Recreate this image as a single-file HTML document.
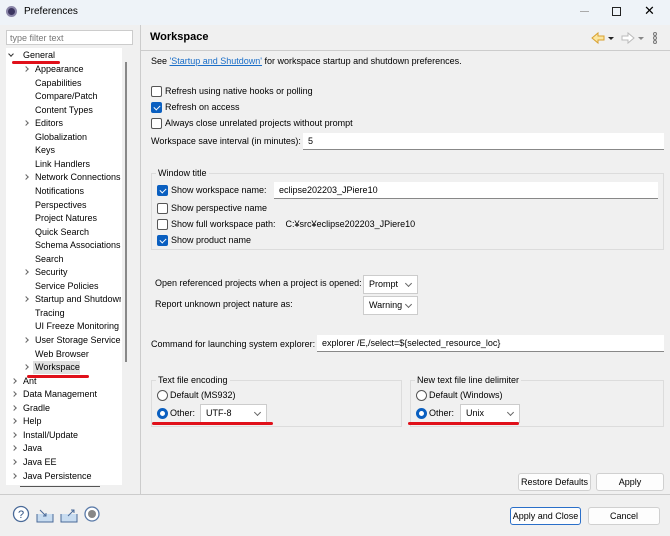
<!DOCTYPE html>
<html><head><meta charset="utf-8"><style>
*{margin:0;padding:0;box-sizing:border-box}
body{width:670px;height:536px;background:#f0f0f0;font-family:"Liberation Sans",sans-serif;font-size:9px;color:#000;position:relative;overflow:hidden}
.a{position:absolute;white-space:nowrap;line-height:12px}
.cb{position:absolute;width:11px;height:11px;border:1px solid #555;border-radius:2px;background:#fff;margin-top:1px}
.cb.on{background:#0a5fc0;border-color:#0a5fc0}
.cb.on::after{content:"";position:absolute;left:3px;top:1px;width:3px;height:5px;border:solid #fff;border-width:0 1.3px 1.3px 0;transform:rotate(45deg)}
.rb{position:absolute;width:11px;height:11px;border:1px solid #555;border-radius:50%;background:#fff;margin-top:1px}
.rb.on{border:3px solid #0a5fc0}
.tx{position:absolute;background:#fff;border-bottom:1px solid #888;height:17px;padding:3px 5px;line-height:11px}
.dd{position:absolute;background:#fff;border:1px solid #ccc;height:19px;padding:3px 5px;line-height:11px}
.dd::after{content:"";position:absolute;right:6px;top:5px;width:4px;height:4px;border:solid #666;border-width:0 1px 1px 0;transform:rotate(45deg)}
.btn{position:absolute;background:#fdfdfd;border:1px solid #d0d0d0;border-radius:3px;height:18px;text-align:center;line-height:16px}
.grp{position:absolute;border:1px solid #dcdcdc}
.red{position:absolute;height:3px;background:#e0101a;border-radius:2px}
.arr{position:absolute;width:4px;height:4px;border:solid #666;border-width:0 1px 1px 0;transform:rotate(-45deg)}
</style></head><body>
<div style="position:absolute;left:0;top:0;width:670px;height:25px;background:#eef3f8"></div>
<div class="a" style="left:6px;top:6px;width:11px;height:11px;border-radius:50%;background:#3b3560;border:2px solid #8a86a8"></div>
<div class="a" style="left:24px;top:6px;font-size:10px">Preferences</div>
<div class="a" style="left:580px;top:11px;width:9px;height:1px;background:#aaa"></div>
<div class="a" style="left:612px;top:7px;width:9px;height:9px;border:1px solid #222"></div>
<div class="a" style="left:644px;top:4px;font-size:13px;line-height:14px">✕</div>
<div class="a" style="left:6px;top:30px;width:127px;height:15px;background:#fff;border:1px solid #ccc;color:#777;padding:1px 3px;line-height:12px">type filter text</div>
<div class="a" style="left:6px;top:48px;width:116px;height:437px;background:#fff"></div>
<div class="a" style="left:125px;top:62px;width:2px;height:300px;background:#888"></div>
<div class="a" style="left:20px;top:486px;width:80px;height:1px;background:#555"></div>
<div class="a" style="left:9px;top:52px;width:4px;height:4px;border:solid #333;border-width:0 1.2px 1.2px 0;transform:rotate(45deg)"></div>
<div class="a" style="left:23px;top:49px">General</div>
<div class="red" style="left:12px;top:61px;width:48px"></div>
<div class="a" style="left:33px;top:361px;width:47px;height:13px;background:#e0e0e0"></div>
<div id="tree"></div>
<div class="red" style="left:27px;top:375px;width:62px"></div>
<div class="a" style="left:140px;top:25px;width:1px;height:469px;background:#ccc"></div>
<div class="a" style="left:140px;top:50px;width:530px;height:1px;background:#ccc"></div>
<div class="a" style="left:0;top:494px;width:670px;height:1px;background:#ccc"></div>
<div class="a" style="left:150px;top:31px;font-size:11px;font-weight:bold;line-height:13px">Workspace</div>
<svg class="a" style="left:590px;top:31px" width="72" height="14"><path d="M2 7 L8 2 V5 H14 V9 H8 V12 Z" fill="#fbe6a0" stroke="#d8a030"/><path d="M18 6 L24 6 L21 9Z" fill="#222"/><path d="M44 7 L38 2 V5 H32 V9 H38 V12 Z" fill="#fff" stroke="#bbb"/><path d="M48 6 L54 6 L51 9Z" fill="#888"/><circle cx="65" cy="3" r="1.5" fill="none" stroke="#777"/><circle cx="65" cy="7" r="1.5" fill="none" stroke="#777"/><circle cx="65" cy="11" r="1.5" fill="none" stroke="#777"/></svg>
<div class="a" style="left:151px;top:55px">See <span style="color:#1a6ec8;text-decoration:underline">'Startup and Shutdown'</span> for workspace startup and shutdown preferences.</div>
<div class="cb" style="left:151px;top:85px"></div><div class="a" style="left:165px;top:85px">Refresh using native hooks or polling</div>
<div class="cb on" style="left:151px;top:101px"></div><div class="a" style="left:165px;top:101px">Refresh on access</div>
<div class="cb" style="left:151px;top:117px"></div><div class="a" style="left:165px;top:117px">Always close unrelated projects without prompt</div>
<div class="a" style="left:151px;top:135px">Workspace save interval (in minutes):</div>
<div class="tx" style="left:303px;top:133px;width:361px">5</div>
<div class="grp" style="left:151px;top:173px;width:513px;height:77px"></div>
<div class="a" style="left:156px;top:167px;background:#f0f0f0;padding:0 2px">Window title</div>
<div class="cb on" style="left:157px;top:184px"></div><div class="a" style="left:171px;top:184px">Show workspace name:</div>
<div class="tx" style="left:274px;top:182px;width:384px">eclipse202203_JPiere10</div>
<div class="cb" style="left:157px;top:202px"></div><div class="a" style="left:171px;top:202px">Show perspective name</div>
<div class="cb" style="left:157px;top:218px"></div><div class="a" style="left:171px;top:218px">Show full workspace path:&nbsp;&nbsp;&nbsp; C:¥src¥eclipse202203_JPiere10</div>
<div class="cb on" style="left:157px;top:234px"></div><div class="a" style="left:171px;top:234px">Show product name</div>
<div class="a" style="left:155px;top:277px">Open referenced projects when a project is opened:</div>
<div class="dd" style="left:363px;top:275px;width:55px">Prompt</div>
<div class="a" style="left:155px;top:298px">Report unknown project nature as:</div>
<div class="dd" style="left:363px;top:296px;width:55px">Warning</div>
<div class="a" style="left:151px;top:338px">Command for launching system explorer:</div>
<div class="tx" style="left:317px;top:335px;width:347px">explorer /E,/select=${selected_resource_loc}</div>
<div class="grp" style="left:151px;top:380px;width:251px;height:47px"></div>
<div class="a" style="left:156px;top:374px;background:#f0f0f0;padding:0 2px">Text file encoding</div>
<div class="rb" style="left:157px;top:389px"></div><div class="a" style="left:170px;top:389px">Default (MS932)</div>
<div class="rb on" style="left:157px;top:407px"></div><div class="a" style="left:170px;top:407px">Other:</div>
<div class="dd" style="left:200px;top:404px;width:67px">UTF-8</div>
<div class="red" style="left:152px;top:422px;width:121px"></div>
<div class="grp" style="left:410px;top:380px;width:254px;height:47px"></div>
<div class="a" style="left:415px;top:374px;background:#f0f0f0;padding:0 2px">New text file line delimiter</div>
<div class="rb" style="left:416px;top:389px"></div><div class="a" style="left:429px;top:389px">Default (Windows)</div>
<div class="rb on" style="left:416px;top:407px"></div><div class="a" style="left:429px;top:407px">Other:</div>
<div class="dd" style="left:460px;top:404px;width:60px">Unix</div>
<div class="red" style="left:408px;top:422px;width:111px"></div>
<div class="btn" style="left:518px;top:473px;width:73px">Restore Defaults</div>
<div class="btn" style="left:596px;top:473px;width:68px">Apply</div>
<svg class="a" style="left:12px;top:505px" width="90" height="20"><circle cx="9" cy="9" r="7.5" fill="#fff" stroke="#4a6a98" stroke-width="1.3"/><text x="9" y="13" font-size="11" text-anchor="middle" fill="#2d4f80" font-family="Liberation Sans">?</text><path d="M25 9 V17 H41 V9 M28 5 L34 11 M31 11 H34 V8" fill="#c8dcf0" stroke="#4a6a98"/><path d="M49 9 V17 H65 V9 M56 11 L62 5 M59 5 H62 V8" fill="#c8dcf0" stroke="#4a6a98"/><circle cx="80" cy="9" r="7" fill="#fff" stroke="#5a7aa8" stroke-width="1.3"/><circle cx="80" cy="9" r="4" fill="#888"/></svg>
<div class="btn" style="left:510px;top:507px;width:71px;border-color:#2a6fc9">Apply and Close</div>
<div class="btn" style="left:588px;top:507px;width:72px">Cancel</div>
<script>
var items=[["Appearance",1],["Capabilities",0],["Compare/Patch",0],["Content Types",0],["Editors",1],["Globalization",0],["Keys",0],["Link Handlers",0],["Network Connections",1],["Notifications",0],["Perspectives",0],["Project Natures",0],["Quick Search",0],["Schema Associations",0],["Search",0],["Security",1],["Service Policies",0],["Startup and Shutdown",1],["Tracing",0],["UI Freeze Monitoring",0],["User Storage Service",1],["Web Browser",0],["Workspace",1]];
var top2=[["Ant"],["Data Management"],["Gradle"],["Help"],["Install/Update"],["Java"],["Java EE"],["Java Persistence"]];
var h="",y=63;
items.forEach(function(it){h+='<div class="a" style="left:35px;top:'+y+'px;width:86px;overflow:hidden">'+it[0]+'</div>';if(it[1])h+='<div class="arr" style="left:24px;top:'+(y+4)+'px"></div>';y+=13.55;});
top2.forEach(function(it){h+='<div class="a" style="left:23px;top:'+y+'px">'+it[0]+'</div><div class="arr" style="left:12px;top:'+(y+4)+'px"></div>';y+=13.55;});
document.getElementById("tree").innerHTML=h;
</script>
</body></html>
